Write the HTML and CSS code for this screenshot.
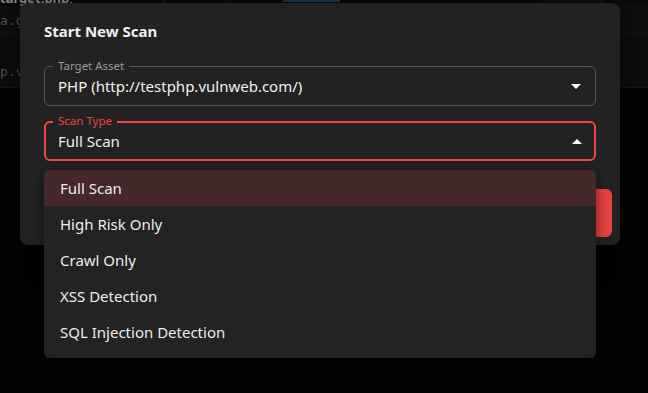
FILE: index.html
```html
<!DOCTYPE html>
<html>
<head>
<meta charset="utf-8">
<link rel="stylesheet" href="styles.css">
</head>
<body>
<div class="page">
  <div class="topbar">
    <span class="top-title">target.php,</span>
    <span class="seg seg-a"></span>
    <span class="seg seg-b"></span>
    <span class="tab-active"></span>
    <span class="tab-warm"></span>
  </div>
  <div class="row row-head"><span class="mono">a.g</span></div>
  <div class="row row-body"><span class="mono">p.v</span></div>
</div>
<div class="backdrop"></div>

<div class="dialog">
  <h2 class="dialog-title">Start New Scan</h2>
  <div class="form">
    <div class="field">
      <label class="field-label">Target Asset</label>
      <span class="field-value">PHP (http://testphp.vulnweb.com/)</span>
      <span class="caret caret-down"></span>
    </div>
    <div class="field field-focused">
      <label class="field-label">Scan Type</label>
      <span class="field-value">Full Scan</span>
      <span class="caret caret-up"></span>
    </div>
  </div>
  <div class="actions">
    <button class="btn btn-text">Cancel</button>
    <button class="btn btn-primary">Start Scan</button>
  </div>
</div>

<ul class="menu">
  <li class="menu-item selected">Full Scan</li>
  <li class="menu-item">High Risk Only</li>
  <li class="menu-item">Crawl Only</li>
  <li class="menu-item">XSS Detection</li>
  <li class="menu-item">SQL Injection Detection</li>
</ul>
</body>
</html>
```
FILE: styles.css
```css
* { box-sizing: border-box; }
html, body {
  margin: 0;
  padding: 0;
  width: 648px;
  height: 393px;
  overflow: hidden;
  background: #050505;
  font-family: "Noto Sans", "Open Sans", sans-serif;
  color: #ececec;
}
.page {
  display: flex;
  flex-direction: column;
}
.topbar {
  position: relative;
  height: 5px;
  background: #0c0c0c;
}
.top-title {
  position: absolute;
  left: 0;
  top: -9px;
  font-size: 13px;
  line-height: 14px;
  font-weight: 700;
  color: #b5b5b5;
}
.seg {
  position: absolute;
  top: 0;
  width: 1px;
  height: 2px;
  background: #333;
}
.seg-a { left: 163px; }
.seg-b { left: 226px; }
.tab-active {
  position: absolute;
  top: 0;
  left: 283px;
  width: 57px;
  height: 2px;
  background: #164a6c;
}
.tab-warm {
  position: absolute;
  top: 0;
  left: 543px;
  width: 60px;
  height: 3px;
  background: #1a150c;
}
.row {
  display: flex;
  align-items: flex-start;
  border-bottom: 1px solid #1c1c1c;
}
.row-head {
  height: 29px;
  background: #121212;
  padding-top: 9px;
}
.row-body {
  height: 54px;
  background: #101010;
  padding-top: 31px;
}
.mono {
  font-family: "DejaVu Sans Mono", monospace;
  font-size: 13px;
  line-height: 14px;
  color: #6e6e6e;
}
.backdrop {
  position: absolute;
  inset: 0;
  background: rgba(0, 0, 0, 0.25);
}

.dialog {
  position: absolute;
  left: 20px;
  top: 3px;
  width: 600px;
  height: 242px;
  background: #222222;
  border-radius: 8px;
  box-shadow: 0 8px 24px rgba(0,0,0,0.5);
  display: flex;
  flex-direction: column;
}
.dialog-title {
  margin: 0;
  padding: 16px 24px 0;
  font-size: 15px;
  line-height: 24px;
  font-weight: 700;
  color: #f0f0f0;
}
.form {
  display: flex;
  flex-direction: column;
  gap: 15px;
  padding: 23px 24px 0;
}
.field {
  position: relative;
  height: 40px;
  border: 1px solid #575757;
  border-radius: 6px;
  display: flex;
  align-items: center;
  padding: 0 13px;
}
.field-focused {
  border: 2px solid #ef4444;
  padding: 0 12px;
}
.field-label {
  position: absolute;
  left: 8px;
  top: -8px;
  padding: 0 5px;
  background: #222222;
  font-size: 11.5px;
  line-height: 14px;
  color: #9b9b9b;
}
.field-focused .field-label {
  left: 7px;
  top: -9px;
  color: #ef4444;
}
.field-value {
  flex: 1;
  font-size: 15px;
  color: #f0f0f0;
}
.caret {
  width: 0;
  height: 0;
  border-left: 5px solid transparent;
  border-right: 5px solid transparent;
  margin-right: 1px;
}
.caret-down { border-top: 5px solid #ffffff; }
.caret-up { border-bottom: 5px solid #ffffff; margin-right: 0; }

.actions {
  margin-top: auto;
  display: flex;
  justify-content: flex-end;
  gap: 8px;
  padding: 8px;
}
.btn {
  height: 48px;
  border: 0;
  border-radius: 6px;
  font-family: inherit;
  font-size: 15px;
  padding: 0 20px;
}
.btn-text {
  background: transparent;
  color: #bbb;
}
.btn-primary {
  background: #e84444;
  color: #fff;
  width: 124px;
}

.menu {
  position: absolute;
  left: 44px;
  top: 170px;
  width: 552px;
  margin: 0;
  padding: 0 0 8px;
  list-style: none;
  background: #232323;
  border-radius: 6px;
  box-shadow: 0 5px 14px rgba(0,0,0,0.55);
  overflow: hidden;
}
.menu-item {
  height: 36px;
  display: flex;
  align-items: center;
  padding: 0 16px;
  font-size: 15px;
  color: #ececec;
}
.menu-item.selected {
  background: #452829;
}
```
